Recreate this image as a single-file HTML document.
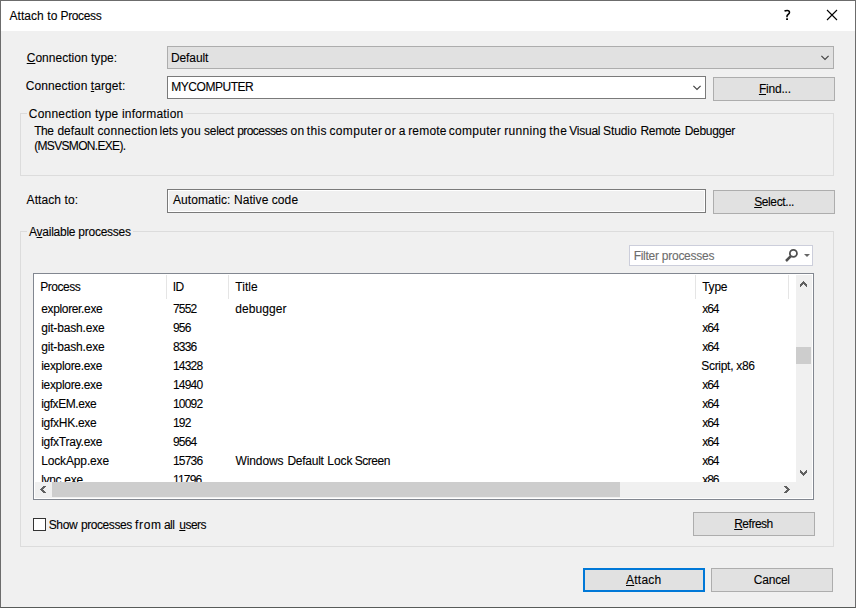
<!DOCTYPE html>
<html><head><meta charset="utf-8">
<style>
*{margin:0;padding:0;box-sizing:border-box}
html,body{width:856px;height:608px;overflow:hidden;background:#f0f0f0}
body{position:relative;font-family:"Liberation Sans",sans-serif;font-size:12px;color:#000}
.a{position:absolute}
.t{position:absolute;white-space:pre;line-height:12px;font-size:12px;-webkit-text-stroke:0.1px currentColor}
.u{text-decoration:underline;text-underline-offset:1px}
#win{position:absolute;left:0;top:0;width:856px;height:608px;border:1px solid #6c6c6c;border-bottom-color:#585b59;background:#f0f0f0}
#title{position:absolute;left:1px;top:1px;width:854px;height:30px;background:#fff}
.btn{position:absolute;background:#e1e1e1;border:1px solid #adadad}
.grp{position:absolute;border:1px solid #dcdcdc}
.sep{position:absolute;top:275px;width:1px;height:24px;background:#e5e5e5}
#clip{position:absolute;left:0;top:0;width:856px;height:608px;clip-path:inset(275px 60px 126px 35px)}
</style></head><body>
<div id="win"></div>
<div id="title"></div>
<svg class="a" style="left:780px;top:6px" width="16" height="18" viewBox="780 6 16 18"><path d="M784.5 11.2C785.2 10.5 786.2 10.4 787.2 10.4C788.7 10.4 789.5 11.2 789.5 12.4C789.5 13.9 787.3 14.6 787 15.9L787 17.2" stroke="#000" stroke-width="1.5" fill="none"/><rect x="786.1" y="18.3" width="1.9" height="1.7" fill="#000"/></svg>
<svg class="a" style="left:826px;top:9px" width="12" height="12" viewBox="0 0 12 12"><path d="M1 1L11 11M11 1L1 11" stroke="#000" stroke-width="1.1" fill="none"/></svg>

<div class="a" style="left:167px;top:46px;width:667px;height:23px;background:#e1e1e1;border:1px solid #adadad"></div>
<svg class="a" style="left:816px;top:50px" width="16" height="14" viewBox="816 50 16 14"><path d="M821.4 55.9L825 59.4L828.6 55.9" stroke="#404040" stroke-width="1.15" fill="none"/></svg>
<div class="a" style="left:167px;top:76px;width:539px;height:23px;background:#fff;border:1px solid #7a7a7a"></div>
<svg class="a" style="left:688px;top:80px" width="16" height="14" viewBox="688 80 16 14"><path d="M693.4 85.9L697 89.4L700.6 85.9" stroke="#404040" stroke-width="1.15" fill="none"/></svg>
<div class="btn" style="left:713px;top:77px;width:122px;height:24px"></div>

<div class="grp" style="left:20px;top:113px;width:814px;height:63px"></div>
<div class="a" style="left:167px;top:189px;width:539px;height:24px;background:#f0f0f0;border:1px solid #7a7a7a;box-shadow:inset 0 0 0 1px #fff"></div>
<div class="btn" style="left:713px;top:190px;width:122px;height:24px"></div>
<div class="grp" style="left:20px;top:231px;width:814px;height:316px"></div>

<div class="a" style="left:629px;top:245px;width:184px;height:21px;background:#fff;border:1px solid #cccedb"></div>
<svg class="a" style="left:780px;top:246px" width="32" height="20" viewBox="780 246 32 20"><circle cx="793.4" cy="253.4" r="3.55" stroke="#505050" stroke-width="1.75" fill="none"/><path d="M790.8 256.2L786 261" stroke="#505050" stroke-width="2.5"/><path d="M804 254L810 254L807 257Z" fill="#666"/></svg>

<div class="a" style="left:33px;top:273px;width:781px;height:227px;background:#fff;border:1px solid #828790"></div>
<div class="sep" style="left:166px"></div>
<div class="sep" style="left:228px"></div>
<div class="sep" style="left:695px"></div>
<div class="sep" style="left:788px"></div>

<div class="a" style="left:796px;top:275px;width:16px;height:207px;background:#f0f0f0"></div>
<div class="a" style="left:796px;top:347px;width:15px;height:17px;background:#cdcdcd"></div>
<div class="a" style="left:35px;top:482px;width:761px;height:16px;background:#f0f0f0"></div>
<div class="a" style="left:796px;top:482px;width:16px;height:16px;background:#f0f0f0"></div>
<div class="a" style="left:52px;top:482px;width:568px;height:15px;background:#cdcdcd"></div>

<div class="a" style="left:33px;top:518px;width:13px;height:13px;background:#fff;border:1px solid #333"></div>
<div class="btn" style="left:693px;top:512px;width:122px;height:24px"></div>
<div class="btn" style="left:583px;top:568px;width:122px;height:24px;border:2px solid #0078d7"></div>
<div class="btn" style="left:711px;top:568px;width:122px;height:24px"></div>
<svg class="a" style="left:0;top:0" width="856" height="608" viewBox="0 0 856 608" shape-rendering="crispEdges" fill="#606060"><rect x="803" y="281" width="1" height="3"/><rect x="802" y="282" width="1" height="3"/><rect x="804" y="282" width="1" height="3"/><rect x="801" y="283" width="1" height="3"/><rect x="805" y="283" width="1" height="3"/><rect x="800" y="284" width="1" height="3"/><rect x="806" y="284" width="1" height="3"/><rect x="803" y="473" width="1" height="3"/><rect x="802" y="472" width="1" height="3"/><rect x="804" y="472" width="1" height="3"/><rect x="801" y="471" width="1" height="3"/><rect x="805" y="471" width="1" height="3"/><rect x="800" y="470" width="1" height="3"/><rect x="806" y="470" width="1" height="3"/><rect x="40" y="489" width="3" height="1"/><rect x="41" y="488" width="3" height="1"/><rect x="41" y="490" width="3" height="1"/><rect x="42" y="487" width="3" height="1"/><rect x="42" y="491" width="3" height="1"/><rect x="43" y="486" width="3" height="1"/><rect x="43" y="492" width="3" height="1"/><rect x="787" y="489" width="3" height="1"/><rect x="786" y="488" width="3" height="1"/><rect x="786" y="490" width="3" height="1"/><rect x="785" y="487" width="3" height="1"/><rect x="785" y="491" width="3" height="1"/><rect x="784" y="486" width="3" height="1"/><rect x="784" y="492" width="3" height="1"/></svg>
<div class="t" id="t0" style="left:9.48px;top:10px;letter-spacing:0.062px;">Attach</div>
<div class="t" id="t1" style="left:47.24px;top:10px;letter-spacing:0.190px;">to</div>
<div class="t" id="t2" style="left:60.52px;top:10px;letter-spacing:-0.369px;">Process</div>
<div class="t" id="t3" style="left:26.72px;top:52px;letter-spacing:0.022px;"><span class="u">C</span>onnection type:</div>
<div class="t" id="t4" style="left:171.00px;top:52px;letter-spacing:-0.110px;">Default</div>
<div class="t" id="t5" style="left:25.82px;top:80px;letter-spacing:0.087px;">Connection <span class="u">t</span>arget:</div>
<div class="t" id="t6" style="left:171.28px;top:81px;letter-spacing:-0.470px;">MYCOMPUTER</div>
<div class="t" id="t7" style="left:758.90px;top:83px;letter-spacing:-0.200px;"><span class="u">F</span>ind...</div>
<div class="t" id="t8" style="left:26.82px;top:108px;letter-spacing:0.193px;background:#f0f0f0;padding:0 2px">Connection type information</div>
<div class="t" id="t9" style="left:34.20px;top:125px;letter-spacing:-0.450px;">The</div>
<div class="t" id="t10" style="left:57.40px;top:125px;letter-spacing:0.049px;">default</div>
<div class="t" id="t11" style="left:97.40px;top:125px;letter-spacing:0.217px;">connection</div>
<div class="t" id="t12" style="left:159.60px;top:125px;letter-spacing:-0.104px;">lets</div>
<div class="t" id="t13" style="left:180.90px;top:125px;letter-spacing:0.200px;">you</div>
<div class="t" id="t14" style="left:204.00px;top:125px;letter-spacing:-0.250px;">select</div>
<div class="t" id="t15" style="left:237.20px;top:125px;letter-spacing:-0.555px;">processes</div>
<div class="t" id="t16" style="left:290.44px;top:125px;letter-spacing:0.510px;">on</div>
<div class="t" id="t17" style="left:306.80px;top:125px;letter-spacing:0.337px;">this</div>
<div class="t" id="t18" style="left:329.44px;top:125px;letter-spacing:0.373px;">computer</div>
<div class="t" id="t19" style="left:384.44px;top:125px;letter-spacing:0.710px;">or</div>
<div class="t" id="t20" style="left:398.80px;top:125px;letter-spacing:-0.050px;">a</div>
<div class="t" id="t21" style="left:408.16px;top:125px;letter-spacing:0.190px;">remote</div>
<div class="t" id="t22" style="left:448.84px;top:125px;letter-spacing:0.282px;">computer</div>
<div class="t" id="t23" style="left:504.20px;top:125px;letter-spacing:0.324px;">running</div>
<div class="t" id="t24" style="left:549.16px;top:125px;letter-spacing:0.570px;">the</div>
<div class="t" id="t25" style="left:569.16px;top:125px;letter-spacing:-0.226px;">Visual</div>
<div class="t" id="t26" style="left:603.08px;top:125px;letter-spacing:-0.106px;">Studio</div>
<div class="t" id="t27" style="left:640.60px;top:125px;letter-spacing:-0.386px;">Remote</div>
<div class="t" id="t28" style="left:684.68px;top:125px;letter-spacing:-0.302px;">Debugger</div>
<div class="t" id="t29" style="left:34.18px;top:140px;letter-spacing:-0.673px;">(MSVSMON.EXE).</div>
<div class="t" id="t30" style="left:26.54px;top:194px;letter-spacing:0.090px;">Attach to:</div>
<div class="t" id="t31" style="left:173.00px;top:194px;letter-spacing:0.079px;">Automatic: Native code</div>
<div class="t" id="t32" style="left:754.18px;top:196px;letter-spacing:-0.387px;"><span class="u">S</span>elect...</div>
<div class="t" id="t33" style="left:27.00px;top:226px;letter-spacing:-0.250px;background:#f0f0f0;padding:0 2px">A<span class="u">v</span>ailable processes</div>
<div class="t" id="t34" style="left:633.65px;top:250px;letter-spacing:-0.260px;color:#6d6d6d">Filter processes</div>
<div class="t" id="t35" style="left:40.28px;top:281px;letter-spacing:-0.470px;">Process</div>
<div class="t" id="t36" style="left:172.64px;top:281px;letter-spacing:-0.410px;">ID</div>
<div class="t" id="t37" style="left:235.18px;top:281px;letter-spacing:0.084px;">Title</div>
<div class="t" id="t38" style="left:702.18px;top:281px;letter-spacing:-0.230px;">Type</div>
<div class="t" id="t39" style="left:48.72px;top:519px;letter-spacing:-0.383px;">Show</div>
<div class="t" id="t40" style="left:80.92px;top:519px;letter-spacing:-0.410px;">processes</div>
<div class="t" id="t41" style="left:134.92px;top:519px;letter-spacing:0.723px;">from</div>
<div class="t" id="t42" style="left:163.92px;top:519px;letter-spacing:-0.490px;">all</div>
<div class="t" id="t43" style="left:179.24px;top:519px;letter-spacing:-0.510px;"><span class="u">u</span>sers</div>
<div class="t" id="t44" style="left:734.18px;top:518px;letter-spacing:-0.486px;"><span class="u">R</span>efresh</div>
<div class="t" id="t45" style="left:626.00px;top:574px;letter-spacing:0.238px;"><span class="u">A</span>ttach</div>
<div class="t" id="t46" style="left:753.82px;top:574px;letter-spacing:-0.230px;">Cancel</div>
<div id="clip">
<div class="t" id="t47" style="left:41.18px;top:303px;letter-spacing:-0.345px;">explorer.exe</div>
<div class="t" id="t48" style="left:173.00px;top:303px;letter-spacing:-0.800px;">7552</div>
<div class="t" id="t49" style="left:235.18px;top:303px;letter-spacing:0.078px;">debugger</div>
<div class="t" id="t50" style="left:702.18px;top:303px;letter-spacing:-1.040px;">x64</div>
<div class="t" id="t51" style="left:41.18px;top:322px;letter-spacing:-0.164px;">git-bash.exe</div>
<div class="t" id="t52" style="left:173.00px;top:322px;letter-spacing:-0.800px;">956</div>
<div class="t" id="t53" style="left:702.18px;top:322px;letter-spacing:-1.040px;">x64</div>
<div class="t" id="t54" style="left:41.18px;top:341px;letter-spacing:-0.164px;">git-bash.exe</div>
<div class="t" id="t55" style="left:173.00px;top:341px;letter-spacing:-0.800px;">8336</div>
<div class="t" id="t56" style="left:702.18px;top:341px;letter-spacing:-1.040px;">x64</div>
<div class="t" id="t57" style="left:41.18px;top:360px;letter-spacing:-0.312px;">iexplore.exe</div>
<div class="t" id="t58" style="left:173.00px;top:360px;letter-spacing:-0.800px;">14328</div>
<div class="t" id="t59" style="left:701.28px;top:360px;letter-spacing:-0.302px;">Script, x86</div>
<div class="t" id="t60" style="left:41.18px;top:379px;letter-spacing:-0.312px;">iexplore.exe</div>
<div class="t" id="t61" style="left:173.00px;top:379px;letter-spacing:-0.800px;">14940</div>
<div class="t" id="t62" style="left:702.18px;top:379px;letter-spacing:-1.040px;">x64</div>
<div class="t" id="t63" style="left:41.18px;top:398px;letter-spacing:-0.430px;">igfxEM.exe</div>
<div class="t" id="t64" style="left:173.00px;top:398px;letter-spacing:-0.800px;">10092</div>
<div class="t" id="t65" style="left:702.18px;top:398px;letter-spacing:-1.040px;">x64</div>
<div class="t" id="t66" style="left:41.18px;top:417px;letter-spacing:-0.270px;">igfxHK.exe</div>
<div class="t" id="t67" style="left:173.00px;top:417px;letter-spacing:-0.800px;">192</div>
<div class="t" id="t68" style="left:702.18px;top:417px;letter-spacing:-1.040px;">x64</div>
<div class="t" id="t69" style="left:41.18px;top:436px;letter-spacing:-0.246px;">igfxTray.exe</div>
<div class="t" id="t70" style="left:173.00px;top:436px;letter-spacing:-0.800px;">9564</div>
<div class="t" id="t71" style="left:702.18px;top:436px;letter-spacing:-1.040px;">x64</div>
<div class="t" id="t72" style="left:41.18px;top:455px;letter-spacing:-0.140px;">LockApp.exe</div>
<div class="t" id="t73" style="left:173.00px;top:455px;letter-spacing:-0.800px;">15736</div>
<div class="t" id="t74" style="left:235.52px;top:455px;letter-spacing:-0.110px;">Windows</div>
<div class="t" id="t75" style="left:287.44px;top:455px;letter-spacing:-0.251px;">Default</div>
<div class="t" id="t76" style="left:327.36px;top:455px;letter-spacing:-0.077px;">Lock</div>
<div class="t" id="t77" style="left:354.76px;top:455px;letter-spacing:-0.482px;">Screen</div>
<div class="t" id="t78" style="left:702.18px;top:455px;letter-spacing:-1.040px;">x64</div>
<div class="t" id="t79" style="left:41.18px;top:474px;letter-spacing:-0.300px;">lync.exe</div>
<div class="t" id="t80" style="left:173.00px;top:474px;letter-spacing:-0.800px;">11796</div>
<div class="t" id="t81" style="left:702.18px;top:474px;letter-spacing:-1.040px;">x86</div>
</div>
</body></html>
